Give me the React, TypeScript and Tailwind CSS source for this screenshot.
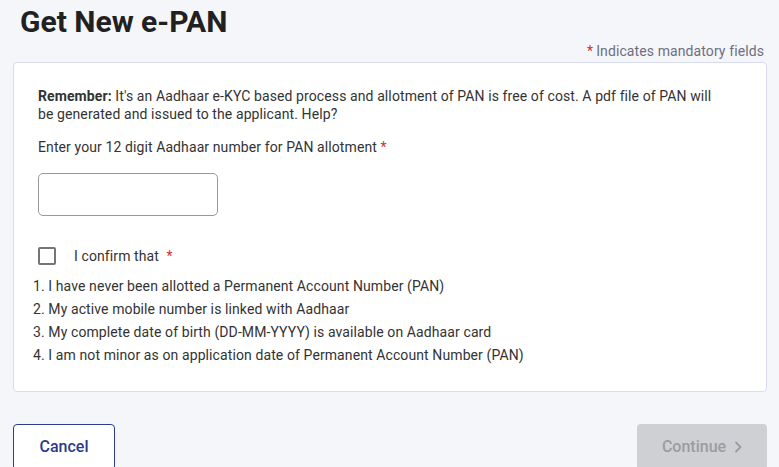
import React from "react";

export default function App() {
  return (
    <div className="min-h-[467px] w-[779px] overflow-hidden bg-[#f5f6fa] text-[#333] [font-family:Roboto,'Noto_Sans',sans-serif]">
      <div className="px-[13px]">
        <h1 className="pl-[7px] pt-[3px] text-[30px] font-bold leading-[38px] text-[#212121]">Get New e-PAN</h1>
        <div className="mt-[1px] flex justify-end pr-[2px] text-[14px] leading-[18px] tracking-[0.1px] text-[#6e6e80]">
          <span className="text-[#d0312d] mr-[3px]">*</span>Indicates mandatory fields
        </div>
        <div className="mt-[2px] rounded-[4px] border border-[#d9dbef] bg-white pl-[24px] pr-[36px] pt-[24px] pb-[27px] w-[754px] tracking-[0.1px]">
          <p className="text-[14px] leading-[18px] text-[#333]">
            <span className="font-bold">Remember:</span> It's an Aadhaar e-KYC based process and allotment of PAN is free of cost. A pdf file of PAN will be generated and issued to the applicant. Help?
          </p>
          <p className="mt-[15px] text-[14px] leading-[18px]">
            Enter your 12 digit Aadhaar number for PAN allotment <span className="text-[#d0312d]">*</span>
          </p>
          <input className="mt-[17px] block h-[43px] w-[180px] rounded-[5px] border border-[#999] bg-white outline-none" />
          <div className="mt-[31px] flex items-center">
            <span className="block h-[18px] w-[18px] rounded-[2px] border-2 border-[#757575]" />
            <span className="ml-[18px] text-[14px] leading-[18px]">I confirm that <span className="ml-[4px] text-[#d0312d]">*</span></span>
          </div>
          <ol className="-ml-[5px] mt-[12px] flex flex-col gap-[5px] text-[14px] leading-[18px]">
            <li>1. I have never been allotted a Permanent Account Number (PAN)</li>
            <li>2. My active mobile number is linked with Aadhaar</li>
            <li>3. My complete date of birth (DD-MM-YYYY) is available on Aadhaar card</li>
            <li>4. I am not minor as on application date of Permanent Account Number (PAN)</li>
          </ol>
        </div>
        <div className="mt-[32px] flex w-[754px] justify-between">
          <button className="h-[46px] w-[102px] rounded-[4px] border border-[#2c3a8f] bg-white text-[16px] font-medium text-[#2c3a8f]">Cancel</button>
          <button className="flex h-[46px] w-[130px] items-center justify-center gap-[8px] rounded-[4px] bg-[#cfd0d4] text-[16px] font-medium text-[#9b9ca0]">
            Continue
            <svg width="8" height="12" viewBox="0 0 8 12" fill="none" stroke="#9b9ca0" strokeWidth="1.8" strokeLinecap="round" strokeLinejoin="round">
              <path d="M2 1.5 6.5 6 2 10.5" />
            </svg>
          </button>
        </div>
      </div>
    </div>
  );
}
